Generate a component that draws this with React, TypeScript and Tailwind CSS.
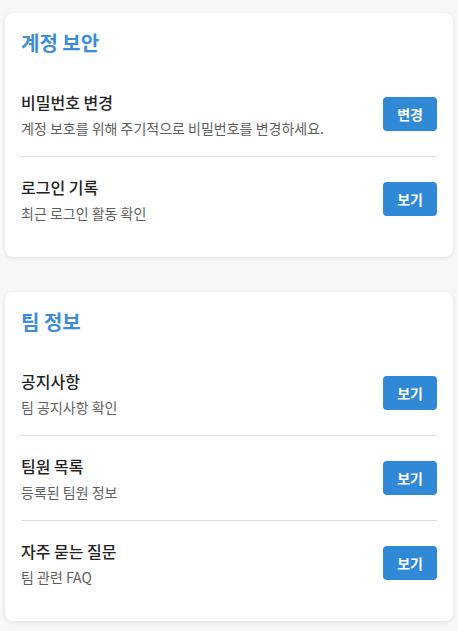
import React from 'react';

type Item = { title: string; desc: string; action: string };

const sections: { heading: string; items: Item[] }[] = [
    {
        heading: '계정 보안',
        items: [
            { title: '비밀번호 변경', desc: '계정 보호를 위해 주기적으로 비밀번호를 변경하세요.', action: '변경' },
            { title: '로그인 기록', desc: '최근 로그인 활동 확인', action: '보기' },
        ],
    },
    {
        heading: '팀 정보',
        items: [
            { title: '공지사항', desc: '팀 공지사항 확인', action: '보기' },
            { title: '팀원 목록', desc: '등록된 팀원 정보', action: '보기' },
            { title: '자주 묻는 질문', desc: '팀 관련 FAQ', action: '보기' },
        ],
    },
];

const App: React.FC = () => {
    return (
        <div
            className="min-h-screen bg-[#f7f7f7] px-[5px] pt-[13px] pb-4"
            style={{ fontFamily: '"Noto Sans CJK KR", "Noto Sans", sans-serif' }}
        >
            <div className="flex flex-col gap-[35px]">
                {sections.map((section) => (
                    <section
                        key={section.heading}
                        className="rounded-lg bg-white px-4 pt-4 pb-4 shadow-[0_1px_4px_rgba(0,0,0,0.1)]"
                    >
                        <h2 className="mb-[15px] text-xl leading-7 font-bold text-[#3a8dd9]">{section.heading}</h2>
                        <div className="flex flex-col">
                            {section.items.map((item, i) => (
                                <div
                                    key={item.title}
                                    className={`flex items-center justify-between py-[18px] ${
                                        i < section.items.length - 1 ? 'border-b border-[#dcdcdc]' : ''
                                    }`}
                                >
                                    <div className="flex flex-col gap-1">
                                        <div className="text-base leading-6 font-medium text-[#222]">{item.title}</div>
                                        <div className="text-sm leading-5 text-[#5f5f5f]">{item.desc}</div>
                                    </div>
                                    <button className="rounded bg-[#3089d6] px-[14px] py-[7px] text-sm leading-5 font-bold text-white">
                                        {item.action}
                                    </button>
                                </div>
                            ))}
                        </div>
                    </section>
                ))}
            </div>
        </div>
    );
};

export default App;
